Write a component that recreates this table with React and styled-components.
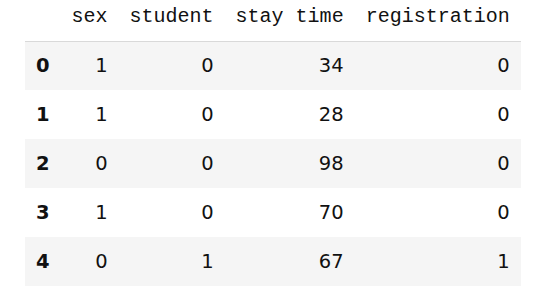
import React from 'react';
import styled, { createGlobalStyle } from 'styled-components';

const GlobalStyle = createGlobalStyle`
  html, body {
    margin: 0;
    padding: 0;
    background: #ffffff;
  }
`;

const rows = [
  { id: 0, sex: 1, student: 0, stay: 34, registration: 0 },
  { id: 1, sex: 1, student: 0, stay: 28, registration: 0 },
  { id: 2, sex: 0, student: 0, stay: 98, registration: 0 },
  { id: 3, sex: 1, student: 0, stay: 70, registration: 0 },
  { id: 4, sex: 0, student: 1, stay: 67, registration: 1 },
];

const columns = ['sex', 'student', 'stay time', 'registration'];

export default function App() {
  return (
    <Wrapper>
      <GlobalStyle />
      <Frame>
        <thead>
          <HeadRow>
            <HeadCell />
            {columns.map((col) => (
              <HeadCell key={col}>{col}</HeadCell>
            ))}
          </HeadRow>
        </thead>
        <tbody>
          {rows.map((row, i) => (
            <BodyRow key={row.id} $striped={i % 2 === 0}>
              <IndexCell>{row.id}</IndexCell>
              <Cell>{row.sex}</Cell>
              <Cell>{row.student}</Cell>
              <Cell>{row.stay}</Cell>
              <Cell>{row.registration}</Cell>
            </BodyRow>
          ))}
        </tbody>
      </Frame>
    </Wrapper>
  );
}

const Wrapper = styled.div`
  padding: 0 0 0 25px;
  width: 540px;
  height: 294px;
  box-sizing: border-box;
  overflow: hidden;
`;

const Frame = styled.table`
  border-collapse: collapse;
  border-spacing: 0;
  color: #111;
`;

const HeadRow = styled.tr`
  height: 41px;
  border-bottom: 1px solid #d9d9d9;
`;

const HeadCell = styled.th`
  font-family: 'Liberation Mono', 'DejaVu Sans Mono', monospace;
  font-size: 20px;
  font-weight: normal;
  text-align: right;
  padding: 0 11px 6px 11px;
  line-height: 20px;
  white-space: nowrap;
`;

const BodyRow = styled.tr`
  height: 49px;
  background: ${(p) => (p.$striped ? '#f5f5f5' : '#ffffff')};
`;

const Cell = styled.td`
  font-family: 'DejaVu Sans', Verdana, sans-serif;
  font-size: 19.5px;
  text-align: right;
  padding: 0 11px;
  line-height: 20px;
`;

const IndexCell = styled(Cell)`
  font-weight: bold;
  text-align: left;
`;
